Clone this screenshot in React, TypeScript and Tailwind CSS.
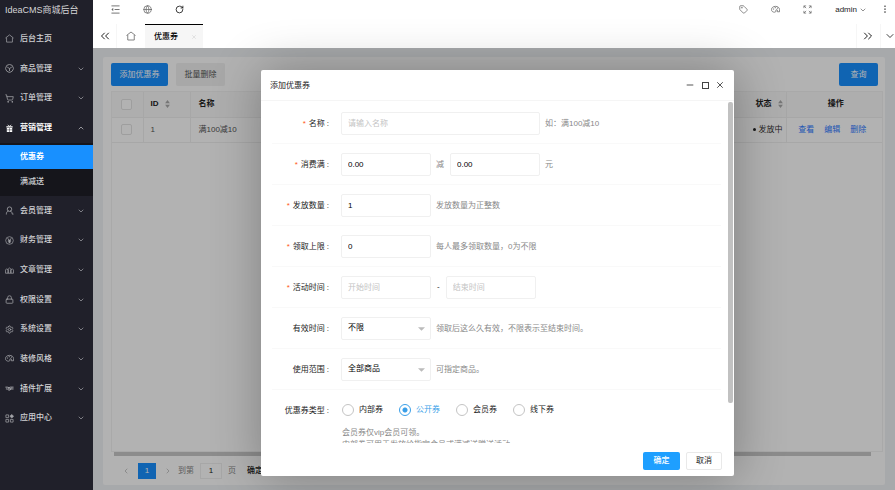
import type { ReactNode } from 'react';
import {
  ChevronDown,
  ChevronLeft,
  ChevronRight,
  ChevronUp,
  ChevronsLeft,
  ChevronsRight,
  Ellipsis,
  Globe,
  Lock,
  Minus,
  RotateCw,
  Settings,
  ShoppingCart,
  Tag,
  X,
} from 'lucide-react';

const ICON = 'h-[9px] w-[9px] shrink-0 opacity-75';

function IndentIcon() {
  return (
    <svg viewBox="0 0 20 20" className="h-[9px] w-[9px]" fill="none" stroke="currentColor" strokeWidth="2">
      <path d="M1 2h18M8 10h11M1 18h18" />
      <path d="M5 6v8L1 10z" fill="currentColor" stroke="none" />
    </svg>
  );
}

function ExpandIcon() {
  return (
    <svg viewBox="0 0 20 20" className="h-[9px] w-[9px]" fill="none" stroke="currentColor" strokeWidth="1.600">
      <path d="M2 7V2h5M2 2l5 5M18 7V2h-5M18 2l-5 5M2 13v5h5M2 18l5-5M18 13v5h-5M18 18l-5-5" />
    </svg>
  );
}

function HomeIcon({ className }: { className: string }) {
  return (
    <svg viewBox="0 0 20 20" className={className} fill="none" stroke="currentColor" strokeWidth="1.6">
      <path d="M1 9l9-7 9 7M3.500 8v10h13V8" strokeLinejoin="round" />
    </svg>
  );
}

function PaletteIcon({ className }: { className: string }) {
  return (
    <svg viewBox="0 0 20 20" className={className} fill="none" stroke="currentColor" strokeWidth="1.7">
      <path
        d="M8 16c-4 0-7-2-7-6 0-4 4-7 9-7s9 3 9 7v5h-5v-4c0-1-2-1-3 0-1 2 1 5-3 5z"
        strokeLinejoin="round"
      />
      <path d="M5 9h1M9 6h1M14 7h1" strokeLinecap="round" strokeWidth="2" />
    </svg>
  );
}

function GoodsIcon() {
  return (
    <svg viewBox="0 0 20 20" className={ICON} fill="none" stroke="currentColor" strokeWidth="1.8">
      <path d="M10 1l6 2 3 7-3 6-6 3-6-3-3-6 3-7z" strokeLinejoin="round" />
      <path d="M5 7l5 3 5-3M10 10v6" />
    </svg>
  );
}

function MemberIcon() {
  return (
    <svg viewBox="0 0 20 20" className={ICON} fill="none" stroke="currentColor" strokeWidth="1.8">
      <circle cx="10" cy="7" r="5" />
      <path d="M7 11c-3 1-4 4-4 7M12 11c3 1 4 4 4 7h2" strokeLinecap="round" />
    </svg>
  );
}

function YenIcon() {
  return (
    <svg viewBox="0 0 20 20" className={ICON} fill="none" stroke="currentColor" strokeWidth="1.5">
      <circle cx="10" cy="10" r="8.500" />
      <path d="M6 5l4 5 4-5M10 10v6M6.500 10.500h7M6.500 13h7" strokeWidth="2" />
    </svg>
  );
}

function BooksIcon() {
  return (
    <svg viewBox="0 0 20 20" className={ICON} fill="none" stroke="currentColor" strokeWidth="1.6">
      <path d="M1 16V9l3-3 3 3v7zM7 16V7l3-3 3 3v9zM13 16V9l3-3 3 3v7z" strokeLinejoin="round" />
    </svg>
  );
}

function GiftIcon() {
  return (
    <svg viewBox="0 0 20 20" className="h-[9px] w-[9px] shrink-0" fill="currentColor">
      <path d="M3 5h14v3H3zM4 9h12v9H4z" />
      <path d="M10 9v9M4 13h12" stroke="#20202a" strokeWidth="1" fill="none" />
      <path d="M6 2l4 3 4-3" stroke="currentColor" strokeWidth="1.600" fill="none" />
    </svg>
  );
}

function HandsIcon() {
  return (
    <svg viewBox="0 0 20 20" className={ICON} fill="none" stroke="currentColor" strokeWidth="2.200">
      <path d="M1 7h4l4 1 3-1h7M2 11h3l4 3 2-1 4-2h4M7 10l4 1 4-2" />
    </svg>
  );
}

function AppsIcon() {
  return (
    <svg viewBox="0 0 20 20" className={ICON} fill="none" stroke="currentColor" strokeWidth="1.6">
      <path d="M2 2h6v6H2zM2 12h6v6H2zM12 12h6v6h-6z" />
      <path d="M15 1l4 4-4 4-4-4z" fill="currentColor" />
    </svg>
  );
}

type NavEntry = { label: string; icon: ReactNode; active?: boolean; plain?: boolean };

const navTop: NavEntry[] = [
  { label: '后台主页', icon: <HomeIcon className={ICON} />, plain: true },
  { label: '商品管理', icon: <GoodsIcon /> },
  { label: '订单管理', icon: <ShoppingCart className={ICON} /> },
  { label: '营销管理', icon: <GiftIcon />, active: true },
];

const navBottom: NavEntry[] = [
  { label: '会员管理', icon: <MemberIcon /> },
  { label: '财务管理', icon: <YenIcon /> },
  { label: '文章管理', icon: <BooksIcon /> },
  { label: '权限设置', icon: <Lock className={ICON} /> },
  { label: '系统设置', icon: <Settings className={ICON} /> },
  { label: '装修风格', icon: <PaletteIcon className={ICON} /> },
  { label: '插件扩展', icon: <HandsIcon /> },
  { label: '应用中心', icon: <AppsIcon /> },
];

function NavItem({ item }: { item: NavEntry }) {
  return (
    <a
      href="#"
      className={`flex flex-1 items-center pr-2 pl-[5px] ${item.active ? 'font-bold text-white' : 'font-medium text-[#d0d1d4]'}`}
    >
      {item.icon}
      <span className="ml-[6px] flex-1">{item.label}</span>
      {item.plain ? null : item.active ? (
        <ChevronUp className="h-2 w-2 opacity-80" />
      ) : (
        <ChevronDown className="h-2 w-2 opacity-80" />
      )}
    </a>
  );
}

function Sidebar() {
  return (
    <aside className="flex w-[93px] shrink-0 flex-col bg-[#20202a] text-[8px]">
      <div className="h-6 shrink-0 pl-[5px] text-[9px] leading-[20px] whitespace-nowrap text-[#d5d5d7]">IdeaCMS商城后台</div>
      <nav className="flex flex-col">
        <div className="flex h-[119px] flex-col">
          {navTop.map((n) => (
            <NavItem key={n.label} item={n} />
          ))}
        </div>
        <div className="flex flex-col bg-[#15151b] pt-[2px]">
          <a href="#" className="flex h-6 items-center bg-[#1890ff] pl-5 font-bold text-white">
            优惠券
          </a>
          <a href="#" className="flex h-[27px] items-center pb-[2px] pl-5 font-medium text-[#d0d1d4]">
            满减送
          </a>
        </div>
        <div className="flex h-[237px] flex-col">
          {navBottom.map((n) => (
            <NavItem key={n.label} item={n} />
          ))}
        </div>
      </nav>
    </aside>
  );
}

function IconButton({ label, className, children }: { label: string; className: string; children: ReactNode }) {
  return (
    <button type="button" aria-label={label} className={`flex items-center justify-center ${className}`}>
      {children}
    </button>
  );
}

function TopBar() {
  return (
    <header className="flex h-6 items-center justify-between bg-white pb-[6px] pl-[6px] text-[#666]">
      <div className="flex">
        <IconButton label="收起菜单" className="w-8">
          <IndentIcon />
        </IconButton>
        <IconButton label="前台" className="w-8">
          <Globe className="h-[9px] w-[9px]" />
        </IconButton>
        <IconButton label="刷新" className="w-8">
          <RotateCw className="h-[9px] w-[9px] text-black" />
        </IconButton>
      </div>
      <div className="flex items-center">
        <IconButton label="标签" className="w-8">
          <Tag className="h-[9px] w-[9px]" />
        </IconButton>
        <IconButton label="主题" className="w-8">
          <PaletteIcon className="h-[9px] w-[9px]" />
        </IconButton>
        <IconButton label="全屏" className="w-8">
          <ExpandIcon />
        </IconButton>
        <button type="button" className="ml-3 flex items-center gap-[2px] pt-px text-[8px] text-[#222]">
          admin
          <ChevronDown className="h-2 w-2" strokeWidth={1.5} />
        </button>
        <IconButton label="更多" className="ml-2 w-5">
          <Ellipsis className="h-2.5 w-2.5 rotate-90" />
        </IconButton>
      </div>
    </header>
  );
}

function TabBar() {
  return (
    <div className="flex h-6 bg-white text-[8px] text-black">
      <IconButton label="向左" className="w-6 border-r border-[#f6f6f6]">
        <ChevronsLeft className="h-3.5 w-3.5" strokeWidth={1.5} />
      </IconButton>
      <IconButton label="主页" className="w-7 text-[#666]">
        <HomeIcon className="h-2.5 w-2.5" />
      </IconButton>
      <div className="flex w-[58px] items-center justify-between border-t border-black bg-[#f6f6f6] pr-[6px] pl-[9px]">
        <span className="font-medium">优惠券</span>
        <button type="button" aria-label="关闭标签" className="text-[#ccc]">
          <X className="h-1.5 w-1.5" />
        </button>
      </div>
      <div className="flex-1" />
      <IconButton label="向右" className="w-6 border-l border-[#f6f6f6] pr-px">
        <ChevronsRight className="h-3.5 w-3.5 shrink-0" strokeWidth={1.5} />
      </IconButton>
      <IconButton label="标签操作" className="w-[15px] border-l border-[#f6f6f6] pl-1">
        <ChevronDown className="h-3 w-3 shrink-0" strokeWidth={1.5} />
      </IconButton>
    </div>
  );
}

function SortIcon() {
  return (
    <svg viewBox="0 0 6 10" className="h-2 w-[5px] fill-[#aaa]">
      <path d="M3 0l3 4H0zM3 10l3-4H0z" />
    </svg>
  );
}

function CheckBox({ label }: { label: string }) {
  return (
    <input
      type="checkbox"
      aria-label={label}
      className="block h-[11px] w-[11px] appearance-none rounded-xs border border-[#e2e2e2] bg-white"
    />
  );
}

function CouponList() {
  return (
    <section className="flex h-full flex-col rounded-xs bg-white pt-[6px] pr-[2px] pl-2 text-[8px] text-[#555]">
      <div className="flex items-center gap-2 pr-[5px]">
        <button type="button" className="h-[23px] w-[57px] rounded-xs bg-[#1890ff] text-white">
          添加优惠券
        </button>
        <button type="button" className="h-[23px] w-[49px] rounded-xs bg-[#f1f1f1]">
          批量删除
        </button>
        <span className="flex-1" />
        <button type="button" className="h-[23px] w-[39px] rounded-xs bg-[#1890ff] text-white">
          查询
        </button>
      </div>
      <div className="mt-[5px] flex-1 border border-[#f3f3f3]">
        <table className="w-full table-fixed border-collapse text-left">
          <thead className="bg-[#fafafa] font-bold text-[#222]">
            <tr className="h-[25px] border-b border-[#f0f0f0]">
              <th className="w-[31px] border-r border-[#f0f0f0] pl-[9px]">
                <CheckBox label="全选" />
              </th>
              <th className="w-[47px] border-r border-[#f0f0f0] pl-[7px]">
                <span className="flex items-center gap-[6px]">
                  ID <SortIcon />
                </span>
              </th>
              <th className="pl-2">名称</th>
              <th className="w-[44px] border-r border-[#f0f0f0]">
                <span className="flex items-center justify-end gap-[6px] pr-[3px]">
                  状态 <SortIcon />
                </span>
              </th>
              <th className="w-24 pl-[3px] text-center">操作</th>
            </tr>
          </thead>
          <tbody>
            <tr className="h-[25px] border-b border-[#f0f0f0]">
              <td className="border-r border-[#f0f0f0] pl-[9px]">
                <CheckBox label="选择第1行" />
              </td>
              <td className="border-r border-[#f0f0f0] pl-[7px]">1</td>
              <td className="pl-2">满100减10</td>
              <td className="border-r border-[#f0f0f0] pr-[3px]">
                <span className="flex items-center justify-end gap-[3px] text-[#333]">
                  <i className="h-[3px] w-[3px] rounded-full bg-[#222]" />
                  发放中
                </span>
              </td>
              <td>
                <span className="flex justify-center gap-[10px] pr-1 text-[#2f7bff]">
                  <a href="#">查看</a>
                  <a href="#">编辑</a>
                  <a href="#">删除</a>
                </span>
              </td>
            </tr>
          </tbody>
        </table>
      </div>
      <div className="mr-3 ml-[3px] h-1 shrink-0 bg-[#c9c9c9]" />
      <div className="flex h-[29px] shrink-0 items-center pl-[11px]">
        <ChevronLeft className="h-2 w-2 text-[#aaa]" />
        <button type="button" className="ml-2 h-4 w-[18px] bg-[#1890ff] text-white">
          1
        </button>
        <ChevronRight className="ml-2 h-2 w-2 text-[#aaa]" />
        <label className="ml-[6px] flex items-center gap-[6px] text-[#888]">
          到第
          <input
            type="text"
            defaultValue="1"
            className="h-4 w-[22px] border border-[#f0f0f0] bg-white text-center text-[#222]"
          />
          页
        </label>
        <button type="button" className="ml-[10px] px-px font-medium text-[#222]">
          确定
        </button>
      </div>
    </section>
  );
}

function Row({ label, htmlFor, required, children }: { label: string; htmlFor: string; required?: boolean; children: ReactNode }) {
  return (
    <div className="flex h-[41px] items-center border-b border-[#f9f9f9]">
      <label htmlFor={htmlFor} className="w-[57px] shrink-0 pt-[2px] text-right whitespace-nowrap">
        {required && <span className="mr-[3px] text-[#ff5722]">*</span>}
        {label}
        <span className="ml-[2px]">:</span>
      </label>
      <div className="ml-[12px] flex items-center">{children}</div>
    </div>
  );
}

const FIELD = 'h-[23px] rounded-xs border border-[#f0f0f0] bg-white px-[6px] text-black outline-none placeholder:text-[#c4c4c4]';

function Hint({ children }: { children: ReactNode }) {
  return <span className="ml-[5px] pt-[2px] whitespace-nowrap text-[#888]">{children}</span>;
}

function SelectBox({ id, options }: { id: string; options: string[] }) {
  return (
    <span className="relative">
      <select id={id} className={`${FIELD} block w-[90px] appearance-none`}>
        {options.map((o) => (
          <option key={o}>{o}</option>
        ))}
      </select>
      <svg viewBox="0 0 8 4" className="pointer-events-none absolute top-[10px] right-[6px] h-[4px] w-[7px] fill-[#bbb]">
        <path d="M0 0h8L4 4z" />
      </svg>
    </span>
  );
}

function CouponDialog() {
  return (
    <div
      role="dialog"
      aria-label="添加优惠券"
      className="flex w-[473px] flex-col rounded-xs bg-white text-[8px] text-[#222] shadow-[1px_1px_50px_rgba(0,0,0,0.3)]"
    >
      <div className="flex h-[31px] shrink-0 items-center border-b border-[#f5f5f5] px-[9px]">
        <h2 className="flex-1 pt-px">添加优惠券</h2>
        <div className="flex gap-[5px] text-[#333]">
          <IconButton label="最小化" className="h-[10px] w-[10px]">
            <Minus className="h-2.5 w-2.5" strokeWidth={2} />
          </IconButton>
          <IconButton label="最大化" className="h-[10px] w-[10px]">
            <span className="h-[7px] w-[7px] border border-[#444]" />
          </IconButton>
          <IconButton label="关闭" className="h-[10px] w-[10px]">
            <X className="h-2.5 w-2.5" strokeWidth={2} />
          </IconButton>
        </div>
      </div>
      <form className="relative min-h-0 flex-1 overflow-hidden pt-[2px] pr-[13px] pl-[11px]">
        <Row label="名称" htmlFor="name" required>
          <input id="name" placeholder="请输入名称" className={`${FIELD} w-[199px]`} />
          <Hint>如：满100减10</Hint>
        </Row>
        <Row label="消费满" htmlFor="full" required>
          <input id="full" defaultValue="0.00" className={`${FIELD} w-[90px]`} />
          <label htmlFor="minus" className="mr-[6px] ml-[5px] pt-[2px] text-[#888]">
            减
          </label>
          <input id="minus" defaultValue="0.00" className={`${FIELD} w-[90px]`} />
          <Hint>元</Hint>
        </Row>
        <Row label="发放数量" htmlFor="amount" required>
          <input id="amount" defaultValue="1" className={`${FIELD} w-[90px]`} />
          <Hint>发放数量为正整数</Hint>
        </Row>
        <Row label="领取上限" htmlFor="limit" required>
          <input id="limit" defaultValue="0" className={`${FIELD} w-[90px]`} />
          <Hint>每人最多领取数量，0为不限</Hint>
        </Row>
        <Row label="活动时间" htmlFor="start" required>
          <input id="start" placeholder="开始时间" className={`${FIELD} w-[90px]`} />
          <span className="mx-[6px]">-</span>
          <input aria-label="结束时间" placeholder="结束时间" className={`${FIELD} w-[90px]`} />
        </Row>
        <Row label="有效时间" htmlFor="valid">
          <SelectBox id="valid" options={['不限']} />
          <Hint>领取后这么久有效，不限表示至结束时间。</Hint>
        </Row>
        <Row label="使用范围" htmlFor="scope">
          <SelectBox id="scope" options={['全部商品']} />
          <Hint>可指定商品。</Hint>
        </Row>
        <fieldset className="flex pt-[14px]">
          <legend className="float-left w-[57px] text-right leading-[13px] whitespace-nowrap">
            优惠券类型<span className="ml-[2px]">:</span>
          </legend>
          <div className="ml-[13px]">
            <div className="flex">
              {['内部券', '公开券', '会员券', '线下券'].map((t) => (
                <label key={t} className="flex w-[57px] items-center gap-[5px] has-checked:text-[#3a9fe8]">
                  <input
                    type="radio"
                    name="type"
                    defaultChecked={t === '公开券'}
                    className="h-3 w-3 appearance-none rounded-full border border-[#c4c4c4] checked:border-[#3a9fe8] checked:bg-[radial-gradient(circle,#3a9fe8_2px,white_3px)]"
                  />
                  {t}
                </label>
              ))}
            </div>
            <p className="mt-[11px] leading-3 text-[#888]">
              会员券仅vip会员可领。
              <br />
              内部券可用于发放给指定会员或满减送赠送活动。
            </p>
          </div>
        </fieldset>
        <div className="absolute top-px right-px h-[301px] w-[5px] rounded-xs bg-[#c1c1c1]" />
      </form>
      <div className="flex h-[33px] shrink-0 items-center justify-end gap-[6px] pt-[2px] pr-3">
        <button type="button" className="h-[18px] w-[37px] rounded-xs bg-[#1e9fff] font-medium text-white">
          确定
        </button>
        <button type="button" className="h-[18px] w-9 rounded-xs border border-[#e9e9e9] bg-white">
          取消
        </button>
      </div>
    </div>
  );
}

export default function App() {
  return (
    <div className="flex h-screen overflow-hidden font-['Liberation_Sans','Noto_Sans_CJK_SC',sans-serif] leading-[12px]">
      <Sidebar />
      <div className="flex min-w-0 flex-1 flex-col">
        <TopBar />
        <TabBar />
        <main className="relative min-h-0 flex-1 bg-[#f0f2f5] px-[10px] pt-[9px] pb-[5px]">
          <CouponList />
          <div className="absolute inset-0 flex justify-center bg-black/30 pt-[22px] pb-[14px] pl-[7px]">
            <CouponDialog />
          </div>
        </main>
      </div>
    </div>
  );
}
